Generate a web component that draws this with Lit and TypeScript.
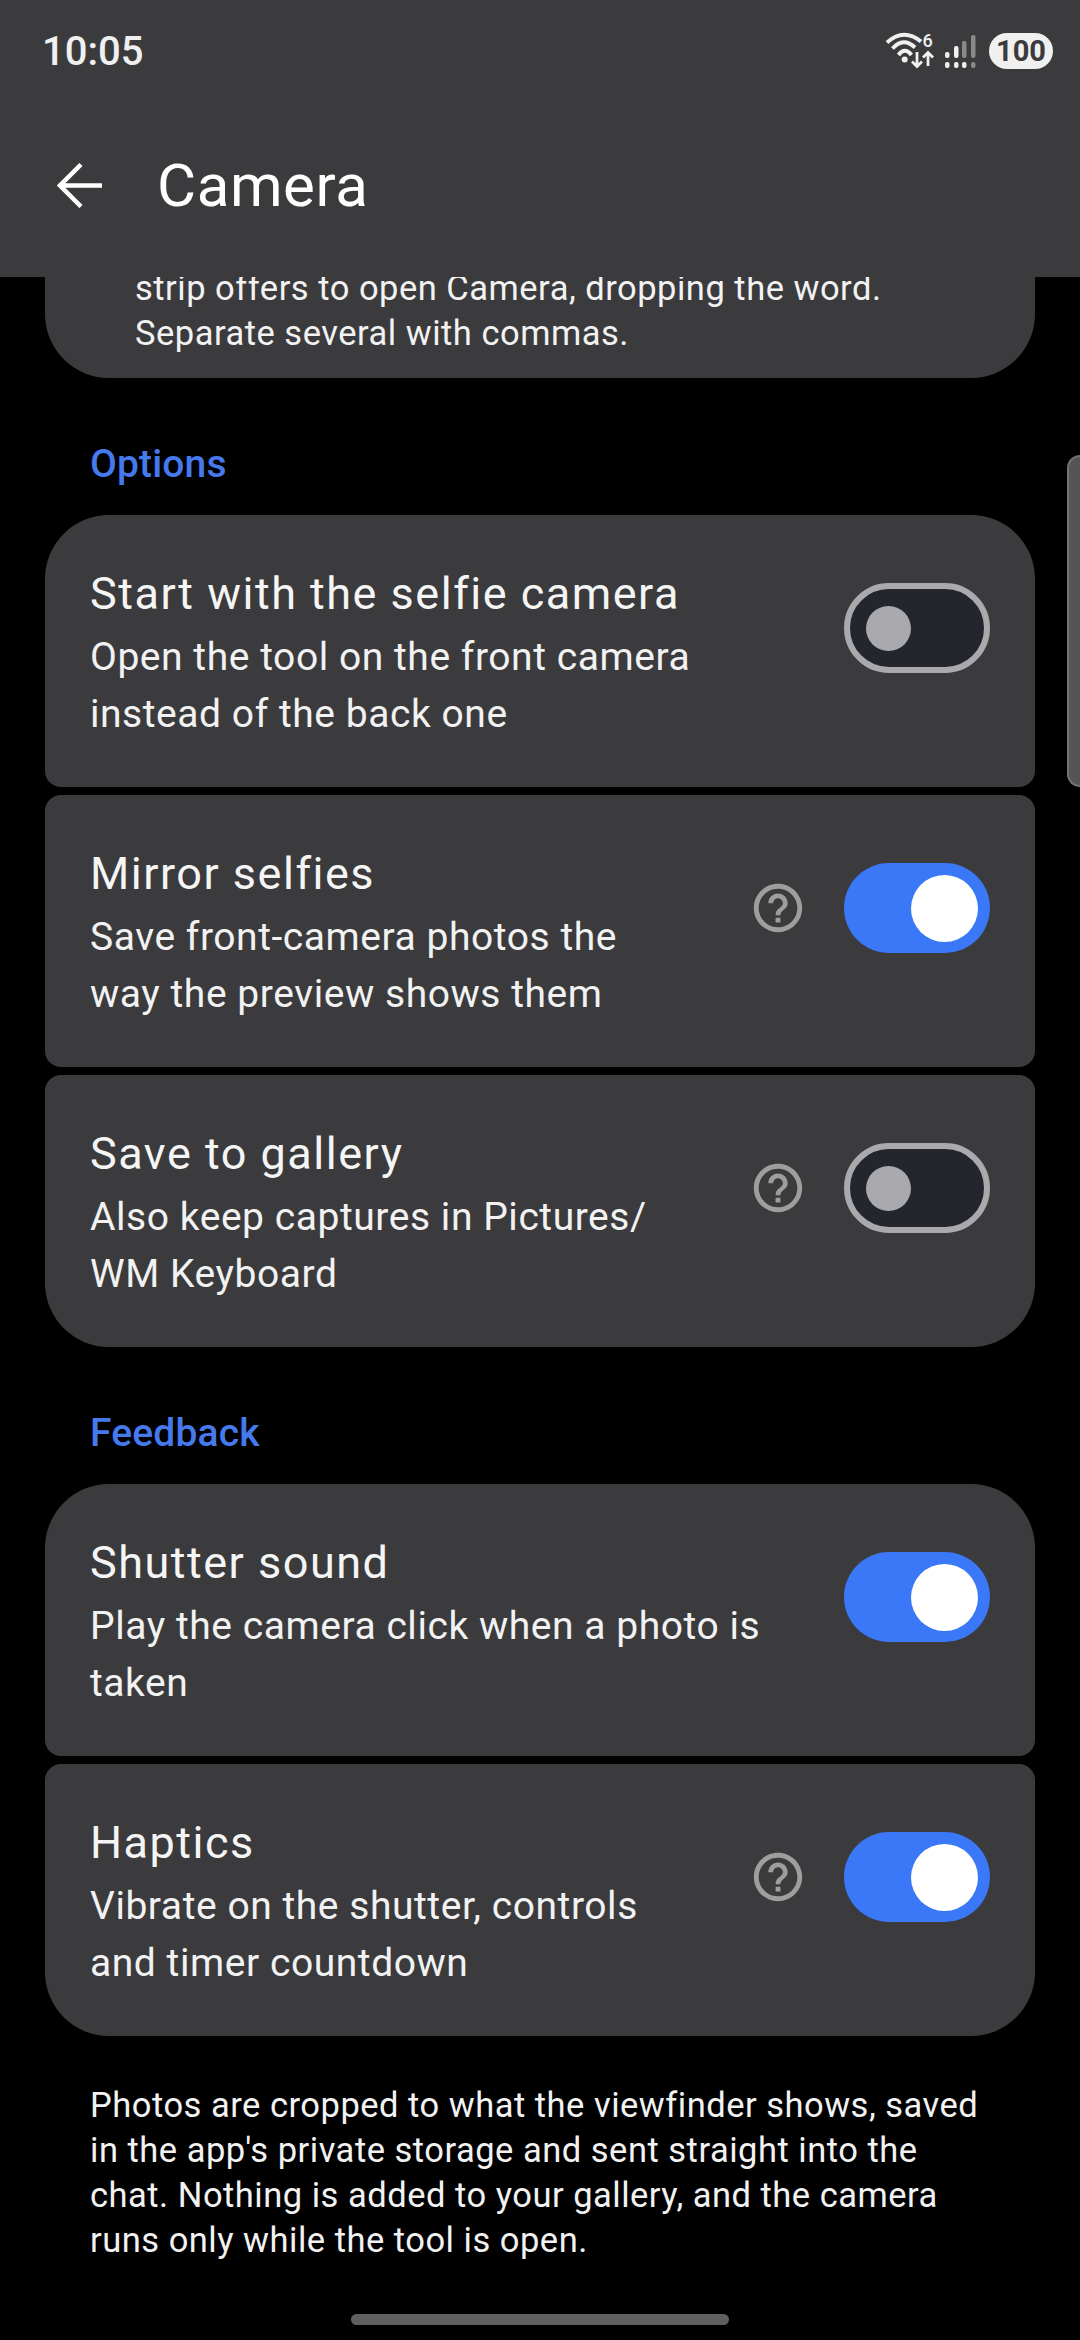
import { LitElement, html, css, svg } from "lit";
import { customElement, property } from "lit/decorators.js";

@customElement("set-toggle")
class SetToggle extends LitElement {
  @property({ type: Boolean }) on = false;

  static styles = css`
    :host {
      display: block;
      flex: none;
      margin-top: 68px;
    }
    .track {
      box-sizing: border-box;
      width: 146px;
      height: 90px;
      border-radius: 45px;
      display: flex;
      align-items: center;
    }
    .off {
      background: #24262d;
      border: 6px solid #a9a9ae;
      padding-left: 16px;
    }
    .on {
      background: #3a78f7;
      justify-content: flex-end;
      padding-right: 12px;
    }
    .knob {
      border-radius: 50%;
    }
    .off .knob {
      width: 45px;
      height: 45px;
      background: #a9a9ae;
    }
    .on .knob {
      width: 67px;
      height: 67px;
      background: #fff;
    }
  `;

  render() {
    return html`<div class="track ${this.on ? "on" : "off"}"><div class="knob"></div></div>`;
  }
}

const helpIcon = svg`<svg width="58" height="58" viewBox="0 0 24 24" fill="#9e9e9e">
  <path d="M11 18h2v-2h-2v2zm1-16C6.48 2 2 6.48 2 12s4.48 10 10 10 10-4.48 10-10S17.52 2 12 2zm0 18c-4.41 0-8-3.590-8-8s3.590-8 8-8 8 3.590 8 8-3.590 8-8 8zm0-14c-2.210 0-4 1.790-4 4h2c0-1.100.9-2 2-2s2 .9 2 2c0 2-3 1.750-3 5h2c0-2.250 3-2.500 3-5 0-2.210-1.790-4-4-4z"/>
</svg>`;

interface Row {
  title: string;
  lines: string[];
  on: boolean;
  help?: boolean;
}

const options: Row[] = [
  { title: "Start with the selfie camera", lines: ["Open the tool on the front camera", "instead of the back one"], on: false },
  { title: "Mirror selfies", lines: ["Save front-camera photos the", "way the preview shows them"], on: true, help: true },
  { title: "Save to gallery", lines: ["Also keep captures in Pictures/", "WM Keyboard"], on: false, help: true },
];

const feedback: Row[] = [
  { title: "Shutter sound", lines: ["Play the camera click when a photo is", "taken"], on: true },
  { title: "Haptics", lines: ["Vibrate on the shutter, controls", "and timer countdown"], on: true, help: true },
];

@customElement("app-root")
export class AppRoot extends LitElement {
  static styles = css`
    :host {
      display: block;
      position: relative;
      width: 1080px;
      height: 2340px;
      overflow: hidden;
      background: #000;
      color: #fff;
      font-family: Roboto, "Noto Sans", sans-serif;
    }
    .appbar {
      box-sizing: border-box;
      height: 277px;
      background: #3b3b3e;
    }
    .status {
      height: 100px;
      box-sizing: border-box;
      padding: 2px 27px 0 42px;
      display: flex;
      align-items: center;
      justify-content: space-between;
    }
    .time {
      font-size: 40px;
      font-weight: 500;
      color: #f0f0f0;
    }
    .status-icons {
      display: flex;
      align-items: center;
    }
    .status-icons svg {
      display: block;
    }
    .net {
      margin-top: -6px;
    }
    .sig {
      margin-left: 7px;
    }
    .six {
      font-size: 18px;
      font-weight: 500;
      fill: #f0f0f0;
    }
    .batt {
      width: 64px;
      height: 36px;
      margin-left: 13px;
      border-radius: 18px;
      background: #f0f0f0;
      color: #3b3b3e;
      font-size: 29px;
      font-weight: 700;
      display: flex;
      align-items: center;
      justify-content: center;
    }
    .titlebar {
      display: flex;
      align-items: center;
      height: 170px;
      padding-left: 57px;
      gap: 55px;
    }
    .titlebar h1 {
      margin: 0;
      font-size: 60px;
      font-weight: 400;
      letter-spacing: 0.6px;
    }
    .content {
      padding: 0 45px;
    }
    .top-card {
      background: #3b3b3e;
      border-radius: 0 0 64px 64px;
      height: 101px;
      box-sizing: border-box;
      padding: 0 90px 22px;
      overflow: hidden;
      display: flex;
      flex-direction: column;
      justify-content: flex-end;
      font-size: 34.5px;
      line-height: 45px;
      letter-spacing: 0.5px;
      color: #f2f2f2;
      white-space: nowrap;
    }
    .top-card div {
      flex: none;
    }
    .section {
      margin: 0;
      padding-left: 45px;
      height: 137px;
      box-sizing: border-box;
      padding-top: 64px;
      font-size: 39px;
      line-height: 44px;
      font-weight: 500;
      letter-spacing: 0.15px;
      color: #4579ec;
    }
    .group {
      display: flex;
      flex-direction: column;
      gap: 8px;
    }
    .card {
      box-sizing: border-box;
      height: 272px;
      background: #3b3b3e;
      border-radius: 16px;
      padding: 0 45px;
      display: flex;
      align-items: flex-start;
    }
    .card:first-child {
      border-radius: 64px 64px 16px 16px;
    }
    .card:last-child {
      border-radius: 16px 16px 64px 64px;
    }
    .text {
      flex: 1;
      min-width: 0;
      padding-top: 51px;
      white-space: nowrap;
    }
    .title {
      font-size: 45px;
      line-height: 56px;
      letter-spacing: 1.5px;
      margin-bottom: 7px;
      color: #f5f5f5;
    }
    .desc {
      font-size: 39px;
      line-height: 57px;
      letter-spacing: 0.55px;
      color: #f2f2f2;
    }
    .help {
      width: 58px;
      height: 58px;
      margin: 84px 37px 0 0;
      flex: none;
    }
    .note {
      margin: 0;
      padding: 47px 90px 0;
      font-size: 34.5px;
      line-height: 45px;
      letter-spacing: 0.5px;
      color: #f2f2f2;
      white-space: nowrap;
    }
    .scroll {
      position: absolute;
      right: 0;
      top: 455px;
      width: 13px;
      height: 332px;
      box-sizing: border-box;
      border: 2px solid #747474;
      border-right: none;
      border-radius: 13px 0 0 13px;
      background: #555;
    }
    .home {
      position: absolute;
      left: 351px;
      top: 2314px;
      width: 378px;
      height: 11px;
      border-radius: 6px;
      background: #5f5f5f;
    }
  `;

  private row(r: Row) {
    return html`<div class="card">
      <div class="text">
        <div class="title">${r.title}</div>
        ${r.lines.map((l) => html`<div class="desc">${l}</div>`)}
      </div>
      ${r.help ? html`<div class="help">${helpIcon}</div>` : ""}
      <set-toggle ?on=${r.on}></set-toggle>
    </div>`;
  }

  render() {
    return html`
      <div class="appbar">
        <div class="status">
          <span class="time">10:05</span>
          <div class="status-icons">
            <svg class="net" width="52" height="42" viewBox="0 -6 52 42" fill="none" stroke="#f0f0f0" stroke-width="4">
              <path d="M1 9.500Q17.500-5.500 35 8.500"/>
              <path d="M6.500 15.500Q17.500 3.500 29 14.500"/>
              <path d="M12.500 22Q18.700 13.500 25.500 22"/>
              <circle cx="18.700" cy="26.500" r="3" fill="#f0f0f0" stroke="none"/>
              <path d="M31 19v14M26 28.500l5 5 5-5M42 33V20M37 24.500l5-5 5 5" stroke-width="2.800"/>
              <text class="six" x="36.500" y="14" stroke="none">6</text>
            </svg>
            <svg class="sig" width="31" height="36" viewBox="0 0 31 36" fill="#f0f0f0">
              <rect x="0" y="19" width="4.500" height="6" rx="2"/><rect x="0" y="29" width="4.500" height="6" rx="2"/>
              <rect x="9" y="13" width="4.500" height="12" rx="2"/><rect x="9" y="29" width="4.500" height="6" rx="2"/>
              <rect x="17" y="8" width="4.500" height="17" rx="2" fill="#8a8a8a"/><rect x="17" y="29" width="4.500" height="6" rx="2"/>
              <rect x="26" y="2" width="4.500" height="23" rx="2" fill="#8a8a8a"/><rect x="26" y="29" width="4.500" height="6" rx="2" fill="#8a8a8a"/>
            </svg>
            <div class="batt">100</div>
          </div>
        </div>
        <div class="titlebar">
          <svg width="45" height="45" viewBox="0 0 45 45" fill="none" stroke="#fff" stroke-width="4.500">
            <path d="M45 22.500H3M24 1.500L3 22.500l21 21"/>
          </svg>
          <h1>Camera</h1>
        </div>
      </div>
      <div class="content">
        <div class="top-card">
          <div>strip offers to open Camera, dropping the word.</div>
          <div>Separate several with commas.</div>
        </div>
        <h2 class="section">Options</h2>
        <div class="group">${options.map((r) => this.row(r))}</div>
        <h2 class="section">Feedback</h2>
        <div class="group">${feedback.map((r) => this.row(r))}</div>
      </div>
      <p class="note">
        Photos are cropped to what the viewfinder shows, saved<br />in the app's private storage and sent straight into the<br />chat. Nothing is added to your gallery, and the camera<br />runs only while the tool is open.
      </p>
      <div class="scroll"></div>
      <div class="home"></div>
    `;
  }
}
